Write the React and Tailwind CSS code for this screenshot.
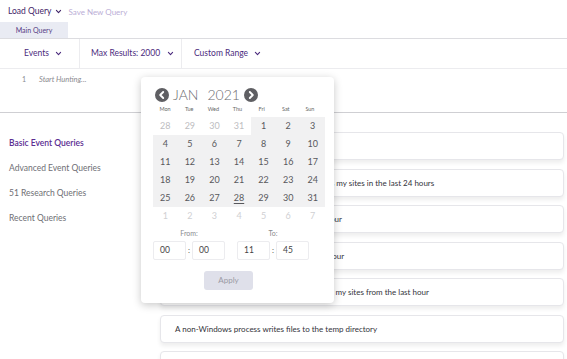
import React from 'react'

const queries = [
  'Processes started by Office apps',
  'All new processes made by PowerShell across my sites in the last 24 hours',
  'Outbound network connections in the last hour',
  'DNS queries to unusual domains in the last hour',
  'Unsigned processes seen on any endpoints in my sites from the last hour',
  'A non-Windows process writes files to the temp directory',
  'Registry persistence keys modified',
]

const sideItems = ['Basic Event Queries', 'Advanced Event Queries', '51 Research Queries', 'Recent Queries']

const weekdays = ['Mon', 'Tue', 'Wed', 'Thu', 'Fri', 'Sat', 'Sun']

// 6 rows of the January 2021 grid, monday first
const days = [
  [28, 29, 30, 31, 1, 2, 3],
  [4, 5, 6, 7, 8, 9, 10],
  [11, 12, 13, 14, 15, 16, 17],
  [18, 19, 20, 21, 22, 23, 24],
  [25, 26, 27, 28, 29, 30, 31],
  [1, 2, 3, 4, 5, 6, 7],
]

function Chevron({ className = '' }) {
  return (
    <svg className={className} width="7" height="7" viewBox="0 0 10 10" fill="none">
      <path d="M2 3.5l3 3 3-3" stroke="currentColor" strokeWidth="1.6" strokeLinecap="round" strokeLinejoin="round" />
    </svg>
  )
}

function NavButton({ dir }) {
  return (
    <svg width="14" height="14" viewBox="0 0 14 14">
      <circle cx="7" cy="7" r="7" fill="#5f5f63" />
      {dir === 'prev' ? (
        <path d="M8.2 4L5.2 7l3 3" stroke="#fff" strokeWidth="1.9" fill="none" strokeLinecap="round" strokeLinejoin="round" />
      ) : (
        <path d="M5.8 4l3 3-3 3" stroke="#fff" strokeWidth="1.9" fill="none" strokeLinecap="round" strokeLinejoin="round" />
      )}
    </svg>
  )
}

function TimeBox({ value }) {
  return (
    <div className="w-[33px] h-[19px] border border-[#ececef] rounded-[2px] flex items-center pl-[6px] text-[8.5px] text-[#444]">
      {value}
    </div>
  )
}

function DatePicker() {
  return (
    <div className="absolute left-[141px] top-[77px] w-[193px] h-[226px] bg-white rounded-[4px] shadow-[0_2px_8px_rgba(0,0,0,0.22)] px-[12px] pt-[11px]">
      <div className="flex items-center pl-[2px] text-[#6b6b6f] font-light">
        <NavButton dir="prev" />
        <span className="text-[14px] leading-none ml-[4px]">JAN</span>
        <span className="text-[14px] leading-none ml-[9px]">2021</span>
        <span className="ml-[4px] flex"><NavButton dir="next" /></span>
      </div>
      <div className="grid grid-cols-7 mt-[2px] mb-[3px] text-[5.5px] text-[#666] text-center h-[10px] items-center">
        {weekdays.map(d => <span key={d}>{d}</span>)}
      </div>
      <div className="w-[172px]">
        {days.map((row, ri) => (
          <div key={ri} className="grid grid-cols-7 h-[18px]">
            {row.map((d, ci) => {
              const outside = (ri === 0 && d > 20) || ri === 5
              const today = ri === 4 && d === 28
              return (
                <div
                  key={ci}
                  className={`flex items-center justify-center text-[9px] ${
                    outside ? 'bg-white' : 'bg-[#f1f1f2]'
                  } ${ri === 5 ? 'text-[#d0d0d3]' : outside ? 'text-[#bdbdc1]' : 'text-[#58585c]'}`}
                >
                  <span className={today ? 'underline underline-offset-2' : ''}>{d}</span>
                </div>
              )
            })}
          </div>
        ))}
      </div>
      <div className="flex mt-[3px] text-[7px] text-[#8a8a8e]">
        <span className="w-[72px] text-center">From:</span>
        <span className="w-[72px] ml-[12px] text-center">To:</span>
      </div>
      <div className="flex items-center mt-[2px]">
        <TimeBox value="00" />
        <span className="w-[6px] text-center text-[8px] text-[#555]">:</span>
        <TimeBox value="00" />
        <div className="w-[12px]" />
        <TimeBox value="11" />
        <span className="w-[6px] text-center text-[8px] text-[#555]">:</span>
        <TimeBox value="45" />
      </div>
      <div className="flex mt-[11px] pl-[51px]">
        <button className="w-[49px] h-[19px] rounded-[3px] bg-[#dfe0ea] text-[8px] text-[#9a9aa4]">Apply</button>
      </div>
    </div>
  )
}

export default function App() {
  return (
    <div className="relative w-[567px] h-[359px] overflow-hidden bg-white font-['Lato','Open_Sans',sans-serif]">
      {/* Top actions */}
      <div className="h-[22px] flex items-center pl-[8px] pt-[1px]">
        <span className="text-[8.5px] text-[#3f2468]">Load Query</span>
        <Chevron className="ml-[4px] text-[#3f2468]" />
        <span className="ml-[6px] text-[8px] text-[#bbaed6]">Save New Query</span>
      </div>

      {/* Tabs */}
      <div className="h-[17px] border-b border-[#dcdce0] flex">
        <div className="w-[68px] bg-[#e9ebf3] flex items-center justify-center text-[7px] text-[#563b84]">
          Main Query
        </div>
      </div>

      {/* Toolbar */}
      <div className="h-[30px] border-b border-[#ececef] flex items-center text-[8.5px] text-[#4b2a7d]">
        <div className="w-[80px] h-full flex items-center pl-[24px] border-r border-[#ececef]">
          Events
          <Chevron className="ml-[6px]" />
        </div>
        <div className="w-[102px] h-full flex items-center pl-[11px] border-r border-[#ececef]">
          Max Results: 2000
          <Chevron className="ml-[7px]" />
        </div>
        <div className="h-full flex items-center pl-[12px]">
          Custom Range
          <Chevron className="ml-[6px]" />
        </div>
      </div>

      {/* Editor */}
      <div className="h-[44px] border-b border-[#cfcfd3] flex pt-[5px] text-[7.5px] text-[#8b8b90]">
        <span className="pl-[22px] w-[39px] text-[7px]">1</span>
        <span className="italic">Start Hunting...</span>
      </div>

      {/* Lower area */}
      <div className="flex">
        <div className="w-[160px] pt-[18px] flex flex-col">
          {sideItems.map((item, i) => (
            <div
              key={item}
              className={`h-[25px] flex items-center pl-[9px] text-[8.5px] ${
                i === 0 ? 'text-[#5b2c91] font-semibold' : 'text-[#6e6e74]'
              }`}
            >
              {item}
            </div>
          ))}
        </div>
        <div className="flex-1 pt-[19px] pr-[3px] flex flex-col gap-[8.5px]">
          {queries.map(q => (
            <div
              key={q}
              className="h-[28px] shrink-0 bg-white border border-[#e6e6ea] rounded-[4px] shadow-[0_3px_4px_rgba(0,0,0,0.07)] flex items-center pl-[14px] text-[8px] text-[#33333a] whitespace-nowrap"
            >
              {q}
            </div>
          ))}
        </div>
      </div>

      <DatePicker />
    </div>
  )
}
